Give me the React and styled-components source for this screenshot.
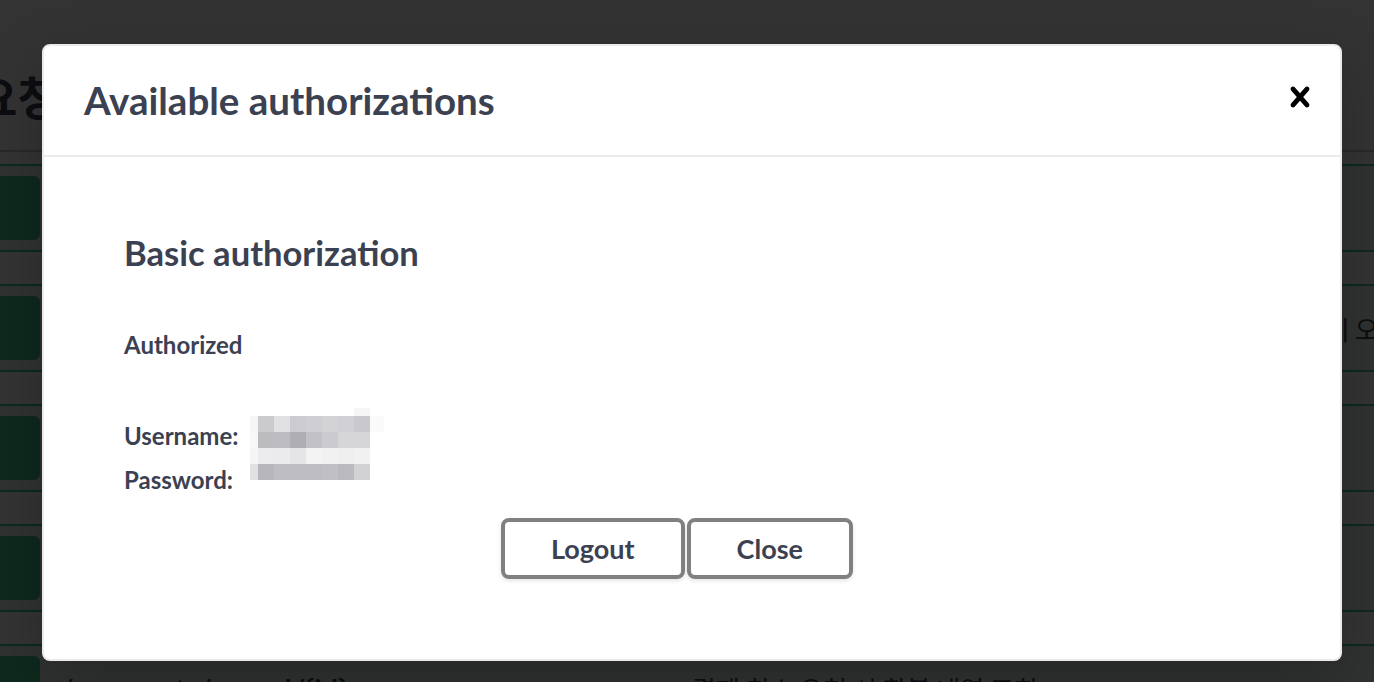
import React from 'react';
import styled, {createGlobalStyle} from 'styled-components';

const GlobalStyle = createGlobalStyle`
  html, body {
    margin: 0;
    padding: 0;
    background: #fff;
    overflow: hidden;
  }
  body {
    font-family: "Lato", "Noto Sans CJK KR", sans-serif;
    color: #3b4151;
  }
`;

const Screen = styled.div`
  position: relative;
  width: 1374px;
  height: 682px;
  overflow: hidden;
  background: #fff;
`;

/* page behind the dialog */
const Page = styled.div`
  margin-left: -132px;
  padding-top: 40px;
  width: 1700px;
`;

const TagHeading = styled.h3`
  margin: 0;
  height: 110px;
  display: flex;
  align-items: center;
  padding-left: 12px;
  border-bottom: 2px solid rgba(59, 65, 81, 0.3);
  font-family: "Noto Sans CJK KR", sans-serif;
  font-size: 46px;
  font-weight: 700;
  color: #3b4151;
`;

const OpList = styled.div`
  margin-top: 12px;
`;

const OpRow = styled.div`
  display: flex;
  align-items: center;
  padding: 10px;
  margin-bottom: 32px;
  border: 2px solid #49cc90;
  border-radius: 8px;
  background: rgba(73, 204, 144, 0.1);
`;

const MethodBadge = styled.span`
  flex: 0 0 160px;
  height: 64px;
  display: flex;
  align-items: center;
  justify-content: center;
  border-radius: 6px;
  background: #49cc90;
  color: #fff;
  font-size: 28px;
  font-weight: 700;
`;

const OpPath = styled.span`
  flex: 0 0 652px;
  box-sizing: border-box;
  padding: 0 20px;
  font-size: 29px;
  font-weight: 700;
  color: #3b4151;
  white-space: nowrap;
`;

const OpDesc = styled.span`
  font-family: "Noto Sans CJK KR", sans-serif;
  font-size: 26px;
  color: #3b4151;
  white-space: nowrap;
`;

/* dialog */
const Backdrop = styled.div`
  position: absolute;
  inset: 0;
  background: rgba(0, 0, 0, 0.8);
  padding: 44px 0 0 42px;
`;

const Modal = styled.div`
  width: 1300px;
  box-sizing: border-box;
  background: #fff;
  border: 2px solid #ebebeb;
  border-radius: 8px;
  box-shadow: 0 20px 60px 0 rgba(0, 0, 0, 0.2);
`;

const ModalHeader = styled.div`
  display: flex;
  align-items: center;
  padding: 24px 0;
  border-bottom: 2px solid #ebebeb;
`;

const ModalTitle = styled.h3`
  flex: 1;
  margin: 0;
  padding: 0 40px;
  font-size: 38.5px;
  line-height: 61px;
  font-weight: 700;
  color: #3b4151;
`;

const CloseButton = styled.button`
  display: flex;
  padding: 0 20px;
  margin-bottom: 8px;
  border: none;
  background: none;
  cursor: pointer;
`;

const ModalBody = styled.div`
  padding: 40px;
`;

const AuthContainer = styled.div`
  padding: 20px 40px;
`;

const AuthTitle = styled.h4`
  margin: 14px 0 55px;
  font-size: 34.6px;
  line-height: 44px;
  font-weight: 700;
  color: #3b4151;
`;

const Label = styled.div`
  font-size: 24px;
  line-height: 30px;
  font-weight: 700;
  color: #3b4151;
`;

const Credentials = styled.div`
  position: relative;
  margin-top: 61px;
  display: flex;
  flex-direction: column;
  gap: 14px;
`;

const Redaction = styled.div`
  position: absolute;
  left: 126px;
  top: -13px;
  display: grid;
  grid-template-columns: 8px repeat(7, 16px) 14px;
  grid-template-rows: 8px repeat(4, 16px);
`;

const Cell = styled.span`
  background: ${p => p.$c};
`;

const ButtonRow = styled.div`
  display: flex;
  justify-content: center;
  gap: 2px;
  padding: 23px 0 20px;
`;

const Button = styled.button`
  margin-right: ${p => (p.$done ? '30px' : '0')};
  padding: 10px 46px;
  border: 4px solid #808080;
  border-radius: 8px;
  background: transparent;
  box-shadow: 0 2px 4px rgba(0, 0, 0, 0.1);
  font-family: "Lato", sans-serif;
  font-size: 27px;
  line-height: 33px;
  font-weight: 700;
  color: #3b4151;
`;

const ops = [
  {path: '/payments/approve', desc: '카드 결제 승인 요청'},
  {path: '/payments/{paymentId}/retry', desc: '정기구독 서비스의 자동갱신 실패건에 대하여 재처리중인 결제 오류 내역 조회'},
  {path: '/payments/{paymentId}', desc: '결제 상세 내역 조회'},
  {path: '/payments/{paymentId}/status', desc: '결제 상태 변경 요청'},
  {path: '/payments/cancel/{id}', desc: '결제 취소 요청 시 환불 내역 조회'},
];

const blur = [
  ['#fff', '#fff', '#fff', '#fff', '#fff', '#fff', '#fff', '#f6f6f7', '#fff'],
  ['#f6f6f7', '#cbcbcf', '#e1e1e4', '#ccccd0', '#cfcfd3', '#d3d3d6', '#d1d1d5', '#c9c9cd', '#fafafa'],
  ['#f7f7f8', '#bbbbc0', '#bcbcc1', '#aeaeb3', '#c1c1c6', '#cbcbcf', '#d6d6d9', '#d5d5d8', '#fff'],
  ['#f5f5f6', '#ececee', '#ebebed', '#e5e5e7', '#f3f3f4', '#f1f1f2', '#efeff0', '#f1f1f2', '#fff'],
  ['#e1e1e4', '#b6b6bb', '#bdbdc2', '#bdbdc2', '#bdbdc2', '#bfbfc4', '#b9b9be', '#d2d2d5', '#fff'],
];

function CloseIcon() {
  return (
      <svg width="40" height="40" viewBox="0 0 20 20" aria-hidden="true">
        <path fill="#000"
              d="M14.348 14.849c-.469.469-1.229.469-1.697 0L10 11.819l-2.651 3.029c-.469.469-1.229.469-1.697 0-.469-.469-.469-1.229 0-1.697l2.758-3.15-2.759-3.152c-.469-.469-.469-1.228 0-1.697.469-.469 1.228-.469 1.697 0L10 8.183l2.651-3.031c.469-.469 1.228-.469 1.697 0 .469.469.469 1.229 0 1.697l-2.758 3.152 2.758 3.15c.469.469.469 1.229 0 1.698z"/>
      </svg>
  );
}

function App() {
  return (
      <Screen>
        <GlobalStyle/>
        <Page>
          <TagHeading>결제 요청</TagHeading>
          <OpList>
            {ops.map(op => (
                <OpRow key={op.path}>
                  <MethodBadge>POST</MethodBadge>
                  <OpPath>{op.path}</OpPath>
                  <OpDesc>{op.desc}</OpDesc>
                </OpRow>
            ))}
          </OpList>
        </Page>

        <Backdrop>
          <Modal>
            <ModalHeader>
              <ModalTitle>Available authorizations</ModalTitle>
              <CloseButton aria-label="Close">
                <CloseIcon/>
              </CloseButton>
            </ModalHeader>
            <ModalBody>
              <AuthContainer>
                <AuthTitle>Basic authorization</AuthTitle>
                <Label>Authorized</Label>
                <Credentials>
                  <Label>Username:</Label>
                  <Label>Password:</Label>
                  <Redaction>
                    {blur.flat().map((c, i) => <Cell key={i} $c={c}/>)}
                  </Redaction>
                </Credentials>
                <ButtonRow>
                  <Button>Logout</Button>
                  <Button $done>Close</Button>
                </ButtonRow>
              </AuthContainer>
            </ModalBody>
          </Modal>
        </Backdrop>
      </Screen>
  );
}

export default App;
